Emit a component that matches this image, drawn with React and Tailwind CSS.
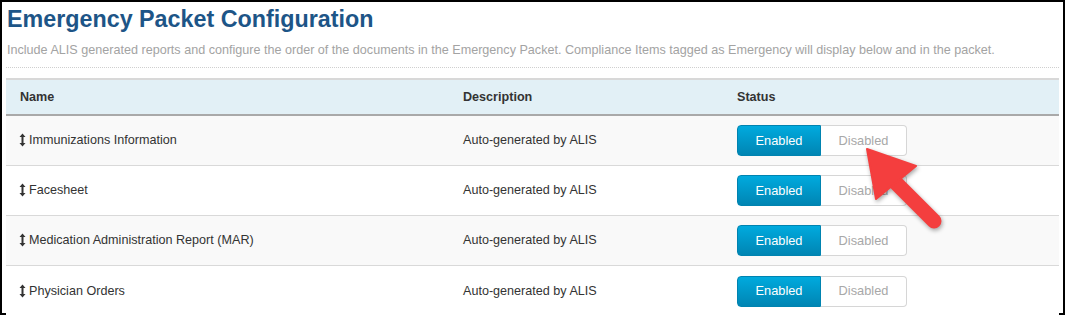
import React from 'react';

const rows = [
  { name: 'Immunizations Information', odd: true },
  { name: 'Facesheet', odd: false },
  { name: 'Medication Administration Report (MAR)', odd: true },
  { name: 'Physician Orders', odd: false },
];

function SortIcon() {
  return (
    <svg width="7" height="14" viewBox="0 0 7 14" className="mr-[3px] shrink-0">
      <path d="M3.5 0.5 L6.5 4 L4.5 4 L4.5 10 L6.5 10 L3.5 13.5 L0.5 10 L2.5 10 L2.5 4 L0.5 4 Z" fill="#333" />
    </svg>
  );
}

function StatusToggle() {
  return (
    <div className="flex h-[31px] w-[170px]">
      <button className="w-[84px] rounded-l-[4px] bg-gradient-to-b from-[#00aade] to-[#0085b3] border border-[#0083b0] text-white text-[12.8px]">
        Enabled
      </button>
      <button className="w-[86px] rounded-r-[4px] bg-white border border-l-0 border-[#d6d6d6] text-[#a8a8a8] text-[12.8px]">
        Disabled
      </button>
    </div>
  );
}

export default function App() {
  return (
    <div className="relative h-[315px] w-[1065px] border-2 border-black bg-white font-['Liberation_Sans',Arial,sans-serif] text-[#333]">
      <div className="pl-1 pr-1">
        <h1 className="pl-[1px] pt-[3px] text-[23.3px] font-bold leading-[28px] text-[#1d5587]">
          Emergency Packet Configuration
        </h1>
        <p className="mt-[10px] pl-[1px] text-[12.6px] leading-[14px] text-[#a3a3a3]">
          Include ALIS generated reports and configure the order of the documents in the Emergency Packet. Compliance Items tagged as Emergency will display below and in the packet.
        </p>
        <div className="mt-[10px] border-t border-dotted border-[#cfcfcf]" />
        <div className="mt-[10px] w-[1053px]">
          <div className="flex h-[38px] items-center border-t-2 border-b-2 border-t-[#d8d8d8] border-b-[#a9a9a9] bg-[#e2f0f6] text-[12.6px] font-bold text-[#333]">
            <div className="w-[457px] pl-[14px]">Name</div>
            <div className="w-[274px]">Description</div>
            <div>Status</div>
          </div>
          {rows.map((r, i) => (
            <div
              key={r.name}
              className={`flex h-[50px] items-center text-[12.6px] ${i < rows.length - 1 ? 'border-b border-[#d9d9d9]' : ''} ${r.odd ? 'bg-[#f9f9f9]' : 'bg-white'}`}
            >
              <div className="flex w-[457px] items-center pl-[13px]">
                <SortIcon />
                <span>{r.name}</span>
              </div>
              <div className="w-[274px]">Auto-generated by ALIS</div>
              <StatusToggle />
            </div>
          ))}
        </div>
      </div>
      <svg
        className="pointer-events-none absolute left-0 top-0"
        width="1065"
        height="315"
        style={{ filter: 'drop-shadow(1px 2px 2px rgba(0,0,0,0.35))' }}
      >
        <line x1="889" y1="176" x2="932" y2="219" stroke="#f43e3e" strokeWidth="15" strokeLinecap="round" />
        <polygon points="865,147 874,197 914,164" fill="#f43e3e" stroke="#f43e3e" strokeWidth="2" strokeLinejoin="round" />
      </svg>
    </div>
  );
}
